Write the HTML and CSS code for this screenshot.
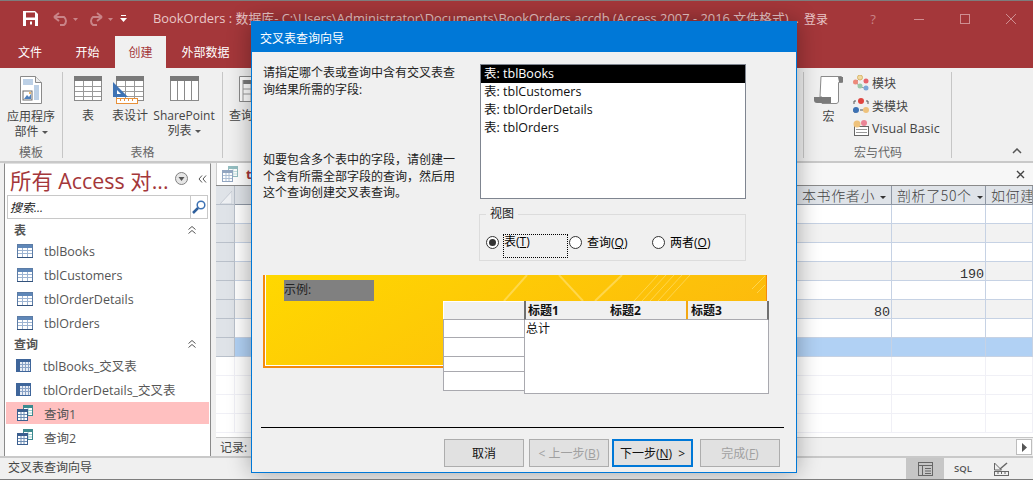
FILE: index.html
```html
<!DOCTYPE html>
<html lang="zh-CN">
<head>
<meta charset="utf-8">
<title>BookOrders</title>
<link rel="stylesheet" href="styles.css">
</head>
<body>
<svg class="defs" width="0" height="0" aria-hidden="true">
  <defs>
    <symbol id="nav-table" viewBox="0 0 16 14">
      <rect x=".5" y=".5" width="15" height="13" fill="#fff" stroke="#5b7ca6"/>
      <rect x="1" y="1" width="14" height="3" fill="#5f87b8"/>
      <path d="M1 6.5h14M1 9.5h14M5.500 4v9M10.500 4v9" stroke="#9db4d2"/>
      <path d="M0 13.500h16" stroke="#33527c"/>
    </symbol>
    <symbol id="nav-cross" viewBox="0 0 15 13">
      <rect width="15" height="13" fill="#3e659a"/>
      <rect x="4" y="3" width="10" height="9" fill="#e8edf5"/>
      <path d="M4 5.500h10M4 8.500h10M6.500 3v9M9.500 3v9M12.500 3v9" stroke="#8aa3c6"/>
    </symbol>
    <symbol id="nav-query" viewBox="0 0 16 16">
      <rect x="6.500" y=".5" width="9" height="10" fill="#fff" stroke="#3d8a8f"/>
      <rect x="6" y="0" width="10" height="3" fill="#3d8a8f"/>
      <path d="M7 5.500h8M7 8h8M11 3v7" stroke="#9cc"/>
      <rect x=".5" y="4.500" width="10" height="11" fill="#fff" stroke="#3b5f8f"/>
      <rect x="0" y="4" width="11" height="3" fill="#3b5f8f"/>
      <path d="M1 9.500h9M1 12.500h9M4 7v8M7 7v8" stroke="#6d8db5"/>
    </symbol>
    <symbol id="rb-grid" viewBox="0 0 28 25">
      <rect x=".5" y=".5" width="27" height="24" fill="#fff" stroke="#8a8a8a"/>
      <rect width="28" height="5" fill="#7a7a7a"/>
      <path d="M1 10.500h26M1 15.500h26M1 20.500h26M9.500 5v19M18.500 5v19" stroke="#9a9a9a"/>
    </symbol>
  </defs>
</svg>

<div class="app">
  <header class="titlebar">
    <div class="qat">
      <svg class="ic-save" viewBox="0 0 15 15"><path d="M0 0h12l3 3v12H0z" fill="#fff"/><rect x="3" y="1.500" width="9" height="5" fill="#a4373a"/><rect x="3" y="9" width="9" height="6" fill="#a4373a"/><rect x="7" y="10.500" width="2" height="3" fill="#fff"/></svg>
      <svg class="ic-undo" viewBox="0 0 26 14"><path d="M2 5h10a5 5 0 0 1 0 8H8M2 5l5-4M2 5l5 4" fill="none" stroke="#c98488" stroke-width="2"/><path d="M21 6h5l-2.500 3z" fill="#c98488"/></svg>
      <svg class="ic-redo" viewBox="0 0 26 14"><path d="M15 5H6a5 5 0 0 0 0 8h4M15 5l-5-4M15 5l-5 4" fill="none" stroke="#c98488" stroke-width="2"/><path d="M21 6h5l-2.500 3z" fill="#c98488"/></svg>
      <svg class="ic-more" viewBox="0 0 7 7"><path d="M1 0h5v1H1zM0 3h7L3.500 7z" fill="#fff"/></svg>
    </div>
    <div class="doc-title">BookOrders : 数据库- C:\Users\Administrator\Documents\BookOrders.accdb (Access 2007 - 2016 文件格式)...</div>
    <div class="login">登录</div>
    <div class="winbtns">
      <span class="help">?</span>
      <svg viewBox="0 0 46 20"><path d="M18 10.500h10" stroke="#cf8f92"/></svg>
      <svg viewBox="0 0 46 20"><rect x="18.500" y="5.500" width="9" height="9" fill="none" stroke="#cf8f92"/></svg>
      <svg viewBox="0 0 46 20"><path d="M18 5l10 10M28 5L18 15" stroke="#cf8f92"/></svg>
    </div>
  </header>

  <nav class="tabs">
    <span class="tab t-file">文件</span>
    <span class="tab t-home">开始</span>
    <span class="tab t-create">创建</span>
    <span class="tab t-ext">外部数据</span>
  </nav>

  <section class="ribbon">
    <div class="group g-tpl">
      <div class="group-items">
        <div class="rb-btn">
          <svg class="rb-ic" width="22" height="28" viewBox="0 0 22 28"><path d="M.5.500h15l6 6v21H.500z" fill="#fff" stroke="#8a8a8a"/><path d="M15.500.500v6h6" fill="#eee" stroke="#8a8a8a"/><rect x="3" y="3" width="10" height="6" fill="#bcd0e6"/><rect x="14" y="9" width="5" height="15" fill="#bcd0e6"/><rect x="3" y="15" width="9" height="9" fill="#fff" stroke="#6a6a6a"/><path d="M4 23l3-4 2 2 2-3v5z" fill="#4f81bd"/><circle cx="10" cy="17" r="1" fill="#e8a33d"/></svg>
          <span class="rb-label">应用程序<br>部件 <i class="caret"></i></span>
        </div>
      </div>
      <div class="group-name">模板</div>
    </div>
    <div class="group g-tbl">
      <div class="group-items">
        <div class="rb-btn b-tbl"><svg class="rb-ic" width="28" height="25"><use href="#rb-grid"/></svg><span class="rb-label">表</span></div>
        <div class="rb-btn b-des">
          <svg class="rb-ic" width="32" height="28" viewBox="0 0 32 28"><use href="#rb-grid" x="3" y="0" width="28" height="25"/><path d="M0 6l15 15H0z" fill="#3d72b4"/><path d="M4 14l4 4H4z" fill="#fff"/><rect x="3.500" y="22.500" width="21" height="5" fill="#fff" stroke="#e8913a"/><path d="M7.500 23v2M11.500 23v2M15.500 23v2M19.500 23v2" stroke="#e8913a"/></svg>
          <span class="rb-label">表设计</span>
        </div>
        <div class="rb-btn b-sp">
          <svg class="rb-ic" width="29" height="25" viewBox="0 0 29 25"><rect x=".5" y=".5" width="28" height="24" fill="#fff" stroke="#8a8a8a"/><rect width="29" height="5" fill="#7a7a7a"/><path d="M7.500 5v19M14.500 5v19M21.500 5v19" stroke="#8a8a8a"/></svg>
          <span class="rb-label">SharePoint<br>列表 <i class="caret"></i></span>
        </div>
      </div>
      <div class="group-name">表格</div>
    </div>
    <div class="group g-qry">
      <div class="group-items">
        <div class="rb-btn b-q">
          <svg class="rb-ic" width="28" height="26" viewBox="0 0 28 26"><path d="M.5.500h27v25H.500z" fill="#fff" stroke="#8a8a8a"/><rect x="4" y="4" width="24" height="4" fill="#7a7a7a"/><path d="M4 4v21M4 13h24M4 18h24M12 8v17" stroke="#9a9a9a" fill="none"/></svg>
          <span class="rb-label">查询</span>
        </div>
      </div>
    </div>
    <div class="group g-mac">
      <div class="mac-row">
        <div class="rb-btn b-mac">
          <svg class="rb-ic" width="29" height="28" viewBox="0 0 29 28"><path d="M7 .500h20c1 0 1.500 1 1.500 3v3h-4V25c0 1.500-1 2.500-2.500 2.500H8V21H6z" fill="#fff" stroke="#8a8a8a"/><path d="M24 1h5v5h-4z" fill="#7a7a7a"/><path d="M0 21h17v6H3c-2 0-3-1-3-3z" fill="#7a7a7a"/></svg>
          <span class="rb-label">宏</span>
        </div>
        <div class="mac-list">
          <div class="mac-item">
            <svg width="16" height="16" viewBox="0 0 16 16"><path d="M7 3L3 7l4 5 5 1" fill="none" stroke="#999"/><circle cx="7" cy="2.500" r="2.500" fill="#f0d9a0" stroke="#d8b56a"/><circle cx="2.500" cy="7" r="2.500" fill="#ec8a7a"/><circle cx="13" cy="6" r="2.500" fill="#e8636a"/><circle cx="7" cy="11" r="2.500" fill="#9cc9a8"/><circle cx="13" cy="13" r="2.500" fill="#7ba6d8"/></svg>
            <span>模块</span>
          </div>
          <div class="mac-item">
            <svg width="16" height="16" viewBox="0 0 16 16"><path d="M3 3H1v3M13 3h2v3M1 11v3h2" fill="none" stroke="#555"/><circle cx="8" cy="3" r="3" fill="#e0453f"/><circle cx="3" cy="12" r="3" fill="#3d72b4"/><path d="M7 12h3" stroke="#555"/><circle cx="13" cy="12" r="3" fill="#eec27c"/></svg>
            <span>类模块</span>
          </div>
          <div class="mac-item">
            <svg width="16" height="16" viewBox="0 0 16 16"><rect x="1.500" y="6.500" width="14" height="9" fill="#fff" stroke="#666"/><path d="M3 9.500h11M3 12.500h11" stroke="#999"/><circle cx="4" cy="4" r="3.500" fill="#eec27c"/><circle cx="11" cy="3" r="3" fill="#ea8496"/></svg>
            <span class="vb">Visual Basic</span>
          </div>
        </div>
      </div>
      <div class="group-name name-mac">宏与代码</div>
    </div>
    <div class="ribbon-end">
      <svg class="collapse" width="10" height="6" viewBox="0 0 10 6"><path d="M1 5l4-4 4 4" fill="none" stroke="#555" stroke-width="1.500"/></svg>
    </div>
  </section>

  <main class="workspace">
    <aside class="nav">
      <div class="nav-head">
        <span class="nav-title">所有 Access 对...</span>
        <svg class="nav-menu" width="13" height="13" viewBox="0 0 13 13"><circle cx="6.500" cy="6.500" r="6" fill="#e6e6e6" stroke="#808080"/><path d="M3.500 5h6L6.500 9z" fill="#555"/></svg>
        <svg class="nav-shut" width="9" height="8" viewBox="0 0 9 8"><path d="M4 .5L1 4l3 3.500M8 .5L5 4l3 3.500" fill="none" stroke="#555"/></svg>
      </div>
      <div class="search">
        <span class="search-text">搜索...</span>
        <span class="search-btn"><svg width="14" height="14" viewBox="0 0 14 14"><circle cx="9" cy="5" r="3.800" fill="#fff" stroke="#3d72b4" stroke-width="1.500"/><path d="M6 8l-5 5" stroke="#2f5f9c" stroke-width="2.500"/></svg></span>
      </div>
      <div class="nav-sec sec-tbl"><b>表</b><svg width="8" height="8" viewBox="0 0 8 8"><path d="M.5 3.500L4 .5l3.500 3M.5 7.500L4 4.500l3.500 3" fill="none" stroke="#555"/></svg></div>
      <div class="nav-row"><svg class="i-t" width="16" height="14"><use href="#nav-table"/></svg><span>tblBooks</span></div>
      <div class="nav-row"><svg class="i-t" width="16" height="14"><use href="#nav-table"/></svg><span>tblCustomers</span></div>
      <div class="nav-row"><svg class="i-t" width="16" height="14"><use href="#nav-table"/></svg><span>tblOrderDetails</span></div>
      <div class="nav-row"><svg class="i-t" width="16" height="14"><use href="#nav-table"/></svg><span>tblOrders</span></div>
      <div class="nav-sec sec-q"><b>查询</b><svg width="8" height="8" viewBox="0 0 8 8"><path d="M.5 3.500L4 .5l3.500 3M.5 7.500L4 4.500l3.500 3" fill="none" stroke="#555"/></svg></div>
      <div class="nav-row"><svg class="i-c" width="15" height="13"><use href="#nav-cross"/></svg><span>tblBooks_交叉表</span></div>
      <div class="nav-row"><svg class="i-c" width="15" height="13"><use href="#nav-cross"/></svg><span>tblOrderDetails_交叉表</span></div>
      <div class="nav-row sel"><svg class="i-t" width="16" height="16"><use href="#nav-query"/></svg><span>查询1</span></div>
      <div class="nav-row"><svg class="i-t" width="16" height="16"><use href="#nav-query"/></svg><span>查询2</span></div>
    </aside>

    <section class="doc">
      <div class="doc-tabs">
        <div class="doc-tab"><svg class="doc-ic" width="16" height="16"><use href="#nav-query"/></svg><b>t</b></div>
        <svg class="doc-close" width="9" height="9" viewBox="0 0 9 9"><path d="M1 1l7 7M8 1L1 8" stroke="#444" stroke-width="1.400"/></svg>
      </div>
      <div class="sheet">
        <div class="cell corner"><svg width="12" height="13" viewBox="0 0 12 13"><path d="M12 0v13H0z" fill="#eef0f3" stroke="#c6ccd4"/></svg></div><div class="cell hd"></div><div class="cell hd">本书作者小<i class="caret dark"></i></div><div class="cell hd">剖析了50个<i class="caret dark"></i></div><div class="cell hd">如何建</div>
        <div class="cell sl"></div><div class="cell"></div><div class="cell"></div><div class="cell"></div><div class="cell"></div>
        <div class="cell sl"></div><div class="cell alt"></div><div class="cell alt"></div><div class="cell alt"></div><div class="cell alt"></div>
        <div class="cell sl"></div><div class="cell"></div><div class="cell"></div><div class="cell"></div><div class="cell"></div>
        <div class="cell sl"></div><div class="cell alt"></div><div class="cell alt"></div><div class="cell alt num">190</div><div class="cell alt"></div>
        <div class="cell sl"></div><div class="cell"></div><div class="cell"></div><div class="cell"></div><div class="cell"></div>
        <div class="cell sl"></div><div class="cell alt"></div><div class="cell alt num">80</div><div class="cell alt"></div><div class="cell alt"></div>
        <div class="cell sl"></div><div class="cell"></div><div class="cell"></div><div class="cell"></div><div class="cell"></div>
        <div class="cell sl"></div><div class="cell cur"></div><div class="cell cur"></div><div class="cell cur"></div><div class="cell cur"></div>
        <div class="cell em"></div><div class="cell em"></div><div class="cell em"></div><div class="cell em"></div><div class="cell em"></div>
        <div class="cell em"></div><div class="cell em"></div><div class="cell em"></div><div class="cell em"></div><div class="cell em"></div>
        <div class="cell em"></div><div class="cell em"></div><div class="cell em"></div><div class="cell em"></div><div class="cell em"></div>
        <div class="cell em"></div><div class="cell em"></div><div class="cell em"></div><div class="cell em"></div><div class="cell em"></div>
      </div>
      <div class="recbar">
        <span class="rec-label">记录:</span>
        <span class="scroll-right"><svg width="5" height="9" viewBox="0 0 5 9"><path d="M0 0l5 4.500L0 9z" fill="#555"/></svg></span>
      </div>
    </section>
  </main>

  <footer class="status">
    <span class="status-text">交叉表查询向导</span>
    <div class="views">
      <span class="view on"><svg width="15" height="14" viewBox="0 0 15 14"><rect x=".5" y=".5" width="14" height="13" fill="none" stroke="#666"/><path d="M0 3.500h15M4.500 3v11M7 6.500h6M7 9h6M7 11.500h6" stroke="#666"/></svg></span>
      <span class="view sql">SQL</span>
      <span class="view"><svg width="15" height="14" viewBox="0 0 15 14"><path d="M.5 1v7h7z" fill="none" stroke="#666"/><path d="M6 7l7-6" stroke="#666" stroke-width="1.500"/><rect x=".5" y="9.500" width="14" height="4" fill="none" stroke="#666"/><path d="M4 10v2M7.500 10v2M11 10v2" stroke="#666"/></svg></span>
    </div>
  </footer>

  <div class="dialog" role="dialog">
    <div class="dlg-title">交叉表查询向导</div>
    <div class="dlg-body">
      <div class="dlg-top">
        <div class="dlg-text">
          <p class="p1">请指定哪个表或查询中含有交叉表查询结果所需的字段:</p>
          <p class="p2">如要包含多个表中的字段，请创建一个含有所需全部字段的查询，然后用这个查询创建交叉表查询。</p>
        </div>
        <div class="dlg-right">
          <div class="listbox">
            <div class="li active">表: tblBooks</div>
            <div class="li">表: tblCustomers</div>
            <div class="li">表: tblOrderDetails</div>
            <div class="li">表: tblOrders</div>
          </div>
          <fieldset class="viewset">
            <legend>视图</legend>
            <label class="radio r1"><i class="dot on"></i><span class="focus">表(<u>T</u>)</span></label>
            <label class="radio r2"><i class="dot"></i><span>查询(<u>Q</u>)</span></label>
            <label class="radio r3"><i class="dot"></i><span>两者(<u>O</u>)</span></label>
          </fieldset>
        </div>
      </div>
      <div class="preview">
        <div class="banner">
          <svg class="banner-art" width="500" height="26" viewBox="0 0 500 26"><g fill="none" stroke="#ffe27a" stroke-opacity=".6"><path d="M294 0l24 26M357 0l-27 26M262 0l-23 26" stroke-width="2"/><path d="M369 26l24-26M377 26l24-26M385 26l24-26M393 26l24-26M401 26l24-26"/><path d="M487 14l14-14M492 18l9-9"/></g></svg>
          <div class="sample">示例:</div>
        </div>
        <div class="ptable">
          <div class="pleft">
            <div class="ph"></div><div class="pc"></div><div class="pc"></div><div class="pc short"></div><div class="pc"></div>
          </div>
          <div class="pright">
            <div class="phead">
              <span class="pcol c1">标题1</span><span class="pcol c2">标题2</span><span class="pcol c3">标题3</span>
            </div>
            <div class="pbody">总计</div>
          </div>
        </div>
      </div>
      <div class="rule"></div>
      <div class="actions">
        <button class="btn b1">取消</button>
        <button class="btn b2" disabled>&lt; 上一步(<u>B</u>)</button>
        <button class="btn b3 primary">下一步(<u>N</u>) &nbsp;&gt;</button>
        <button class="btn b4" disabled>完成(<u>F</u>)</button>
      </div>
    </div>
  </div>
</div>
</body>
</html>
```

FILE: styles.css
```css
* { box-sizing: border-box; }
html, body { margin: 0; padding: 0; }
body { width: 1033px; height: 480px; overflow: hidden; font-family: "Open Sans", "Noto Sans CJK SC", sans-serif; font-size: 12px; color: #444; }
.defs { position: absolute; }
.app { position: relative; width: 1033px; height: 480px; display: flex; flex-direction: column; overflow: hidden; background: #f0f0f0; border-top: 1px solid #7d7d7d; border-bottom: 1px solid #7d7d7d; }

.titlebar { height: 35px; flex: none; background: #a4373a; display: flex; align-items: center; color: #e9c6c7; }
.qat { width: 153px; flex: none; display: flex; align-items: center; padding-left: 23px; }
.ic-save { width: 15px; height: 15px; }
.ic-undo { width: 26px; height: 14px; margin-left: 14px; }
.ic-redo { width: 26px; height: 14px; margin-left: 9px; }
.ic-more { width: 7px; height: 7px; margin-left: 7px; }
.doc-title { width: 651px; flex: none; font-size: 12.900px; white-space: nowrap; overflow: hidden; padding-bottom: 2px; }
.login { width: 46px; flex: none; font-size: 12px; }
.winbtns { display: flex; align-items: center; margin-left: auto; padding-right: 2px; }
.winbtns svg { width: 46px; height: 20px; display: block; }
.help { width: 46px; text-align: center; font-size: 13px; color: #c98488; }

.tabs { height: 32px; flex: none; background: #a4373a; display: flex; color: #fff; font-size: 12px; }
.tab { display: flex; align-items: center; justify-content: center; padding-bottom: 1px; }
.t-file { width: 60px; }
.t-home { width: 55px; }
.t-create { width: 51px; background: #f0f0f0; color: #a4373a; }
.t-ext { width: 79px; }

.ribbon { height: 95px; flex: none; background: #f0f0f0; border-bottom: 2px solid #c9c9c9; display: flex; padding-top: 4px; }
.group { position: relative; flex: none; border-right: 1px solid #c6c6c6; height: 86px; display: flex; flex-direction: column; }
.g-tpl { width: 63px; }
.g-tbl { width: 160px; }
.g-qry { width: 581px; border-right: 1px solid #c6c6c6; }
.g-mac { width: 148px; }
.group-items { flex: 1; display: flex; min-height: 0; }
.group-name { height: 12px; line-height: 14px; text-align: center; color: #666; font-size: 12px; flex: none; }
.rb-btn { display: flex; flex-direction: column; align-items: center; text-align: center; white-space: nowrap; padding-top: 4px; }
.rb-ic { display: block; margin-bottom: 5px; flex: none; }
.rb-label { line-height: 15px; color: #444; font-size: 12px; }
.g-tpl .rb-btn { width: 62px; }
.b-tbl { width: 50px; }
.b-tbl .rb-ic { margin-bottom: 7px; }
.b-des { width: 36px; margin-left: -1px; }
.b-des .rb-ic { margin-bottom: 4px; margin-left: -3px; }
.b-sp { width: 70px; margin-left: 1px; }
.b-sp .rb-ic { margin-bottom: 7px; }
.b-q { width: 24px; margin-left: 6px; align-items: flex-start; }
.b-q .rb-ic { margin-left: 10px; margin-bottom: 6px; }
.caret { display: inline-block; width: 0; height: 0; border: 3px solid transparent; border-top-color: #555; border-bottom: 0; vertical-align: middle; }
.mac-row { display: flex; flex: 1; min-height: 0; }
.b-mac { width: 49px; }
.b-mac .rb-ic { margin: 0 0 5px; }
.mac-list { padding-top: 0; }
.mac-item { display: flex; align-items: center; gap: 3px; height: 22.500px; white-space: nowrap; color: #444; font-size: 12px; }
.vb { font-size: 12.500px; }
.name-mac { text-align: left; padding-left: 50px; }
.ribbon-end { flex: 1; position: relative; }
.collapse { position: absolute; right: 11px; bottom: 7px; }

.workspace { height: 293px; flex: none; display: flex; background: #f0f0f0; padding-left: 4px; }
.nav { width: 207px; flex: none; background: #fff; border-left: 1px solid #8a8a8a; border-right: 1px solid #8a8a8a; border-top: 1px solid #e0e0e0; padding: 0 1px; }
.nav-head { height: 31px; display: flex; align-items: center; padding-left: 4px; }
.nav-title { width: 164px; font-size: 21.400px; color: #a4373a; white-space: nowrap; }
.nav-menu { flex: none; margin-left: 1px; margin-bottom: 2px; }
.nav-shut { flex: none; margin-left: 10px; margin-bottom: 2px; }
.search { height: 24px; width: 201px; margin-left: 1px; border: 1px solid #c8c8c8; display: flex; align-items: center; justify-content: space-between; }
.search-text { font-style: italic; color: #222; padding-left: 2px; font-size: 12px; }
.search-btn { width: 17px; height: 22px; border-left: 1px solid #c8c8c8; display: flex; align-items: center; justify-content: center; }
.nav-sec { height: 20px; display: flex; align-items: center; justify-content: space-between; padding: 0 13px 0 8px; color: #555; }
.sec-tbl { padding-top: 1px; }
.sec-q { height: 18px; }
.nav-sec b { font-size: 12px; }
.nav-row { height: 24px; display: flex; align-items: center; color: #555; font-size: 12.500px; white-space: nowrap; }
.nav-row.sel { height: 22px; margin: 1px 0; background: #ffc0c0; width: 203px; }
.nav-row span { margin-left: 11px; }
.i-t { margin-left: 11px; flex: none; }
.i-c { margin-left: 10px; flex: none; margin-right: 1px; }

.doc { flex: 1; min-width: 0; margin-left: 5px; background: #fff; display: flex; flex-direction: column; }
.doc-tabs { height: 23px; flex: none; background: #f7f7f7; border-bottom: 1px solid #8a8a8a; display: flex; align-items: center; justify-content: space-between; padding-right: 8px; }
.doc-tab { height: 22px; width: 60px; background: #fff; border-left: 1px solid #ccc; display: flex; align-items: center; gap: 8px; padding-left: 5px; }
.doc-ic { opacity: .55; }
.doc-tab b { color: #a4373a; font-size: 13px; }
.doc-close { flex: none; }
.sheet { flex: none; display: grid; grid-template-columns: 19px 562px 95px 94px 1fr; grid-auto-rows: 19px; overflow: hidden; height: 251px; }
.cell { border-right: 1px solid #c6d2e4; border-bottom: 1px solid #c6d2e4; background: #fff; font-family: "Liberation Mono", "Noto Sans CJK SC", monospace; font-size: 13.400px; color: #333; line-height: 26px; padding: 0 1px; white-space: nowrap; overflow: hidden; }
.alt { background: #f2f2f2; }
.cur { background: #b1d1f4; }
.em { border-color: #f0f0f6; }
.hd { height: 19px; background: #dfe3e8; border-color: #8f98a5; font-size: 14px; padding: 0 0 0 5px; color: #444; font-family: "Noto Sans CJK SC", sans-serif; font-weight: 300; line-height: 19px; letter-spacing: .6px; }
.corner { background: #dfe3e8; border-color: #b9c0ca; display: flex; align-items: flex-end; justify-content: center; padding: 0 0 0 1px; }
.corner svg { display: block; }
.sl { background: #dfe3e8; border-color: #b9c0ca; }
.num { text-align: right; }
.caret.dark { border-top-color: #333; margin-left: 5px; }
.recbar { height: 19px; flex: none; background: #f0f0f0; border-top: 1px solid #c6c6c6; display: flex; align-items: center; justify-content: space-between; padding: 0 1px 0 4px; }
.rec-label { color: #444; }
.scroll-right { width: 16px; height: 16px; background: #fff; border: 1px solid #bdbdbd; display: flex; align-items: center; justify-content: center; }

.status { flex: 1; min-height: 0; background: #f0f0f0; border-top: 2px solid #c9c9c9; display: flex; align-items: center; justify-content: space-between; padding-right: 13px; }
.status-text { padding: 0 0 4px 8px; color: #444; }
.views { display: flex; height: 100%; }
.view { width: 38px; display: flex; align-items: center; justify-content: center; color: #555; }
.view.on { background: #c6c6c6; }
.sql { font-size: 9.500px; font-weight: 600; }

.dialog { position: absolute; left: 251px; top: 20px; width: 546px; height: 452px; border: 1px solid #0078d7; background: #f0f0f0; box-shadow: 0 0 22px rgba(0, 0, 0, .33); color: #111; display: flex; flex-direction: column; }
.dlg-title { height: 30px; flex: none; background: #0078d7; color: #fff; font-size: 12px; display: flex; align-items: center; padding: 1px 0 0 8px; }
.dlg-body { flex: 1; padding: 12px 0 0 11px; min-height: 0; }
.dlg-top { display: flex; height: 211px; }
.dlg-text { width: 216px; flex: none; padding-top: 1px; }
.dlg-text p { margin: 0; width: 194px; line-height: 16.500px; font-size: 12px; color: #222; }
.p1 { height: 87px; }
.dlg-right { width: 267px; flex: none; display: flex; flex-direction: column; }
.listbox { width: 266px; margin-left: 1px; height: 135px; background: #fff; border: 1px solid #7f8590; flex: none; }
.li { height: 18px; line-height: 17px; font-size: 12.500px; padding-left: 3px; color: #111; white-space: nowrap; }
.li.active { background: #000; color: #fff; }
.viewset { position: relative; margin: 8px 0 0; padding: 0; width: 267px; height: 54px; border: 1px solid #dcdcdc; min-width: 0; flex: none; }
.viewset legend { margin-left: 6px; padding: 0 4px; font-size: 12px; line-height: 14px; color: #222; }
.radio { position: absolute; top: 9px; display: flex; align-items: center; gap: 5px; font-size: 12px; color: #000; white-space: nowrap; height: 24px; }
.r1 { left: 6px; }
.r2 { left: 89px; }
.r3 { left: 172px; }
.dot { width: 13px; height: 13px; border-radius: 50%; border: 1px solid #333; background: #fff; flex: none; display: block; position: relative; }
.dot.on::after { content: ""; position: absolute; left: 2px; top: 2px; width: 7px; height: 7px; border-radius: 50%; background: #333; }
.focus { width: 65px; height: 24px; line-height: 14px; border: 1px dotted #000; margin-left: -1px; align-self: flex-start; margin-top: 4px; }
.preview { position: relative; height: 118px; }
.banner { width: 504px; height: 93px; background: linear-gradient(150deg, #ffd800 0%, #fcb50f 100%); border-left: 2px solid #f58a0c; border-bottom: 2px solid #f58a0c; border-right: 1px solid #f58a0c; box-shadow: inset 1px -1px 0 #fff; padding: 5px 0 0 19px; position: relative; }
.banner-art { position: absolute; left: 0; top: 0; }
.sample { position: relative; width: 90px; height: 21px; background: #808080; line-height: 20px; font-size: 12px; color: #222; }
.ptable { position: absolute; left: 180px; top: 26px; display: flex; }
.pleft { width: 81px; display: flex; flex-direction: column; }
.ph { height: 18px; background: #f0f0f0; border-top: 1px solid #fff; border-left: 1px solid #fff; }
.pc { height: 19px; background: #fff; border: 1px solid #a9a9af; border-right: 0; border-top: 0; }
.pc:nth-child(2) { border-top: 1px solid #a9a9af; }
.pc.short { height: 15px; }
.pright { width: 245px; }
.phead { height: 19px; background: #f0f0f0; border-bottom: 1px solid #a9a9af; border-left: 2px solid #707070; border-right: 2px solid #707070; position: relative; display: flex; }
.pcol { font-weight: 700; font-size: 12px; line-height: 19px; color: #111; flex: none; white-space: nowrap; }
.c1 { width: 80px; padding-left: 2px; }
.c2 { width: 80px; padding-left: 4px; }
.c3 { padding-left: 3px; border-left: 2px solid #f3a712; }
.pbody { height: 74px; background: #fff; border: 1px solid #a9a9af; border-top: 0; padding-left: 1px; font-size: 12px; line-height: 18px; color: #111; }
.rule { margin: 34px 0 0 -2px; width: 523px; height: 1px; background: #000; }
.actions { display: flex; margin: 11px 0 0 181px; }
.btn { height: 28px; width: 80px; background: #e1e1e1; border: 1px solid #adadad; font-family: inherit; font-size: 12px; color: #111; padding: 0; flex: none; }
.btn:disabled { color: #a0a0a0; }
.b2 { margin-left: 5px; }
.b3 { margin-left: 3px; width: 81px; }
.b4 { margin-left: 7px; }
.primary { border: 2px solid #0078d7; }
```
